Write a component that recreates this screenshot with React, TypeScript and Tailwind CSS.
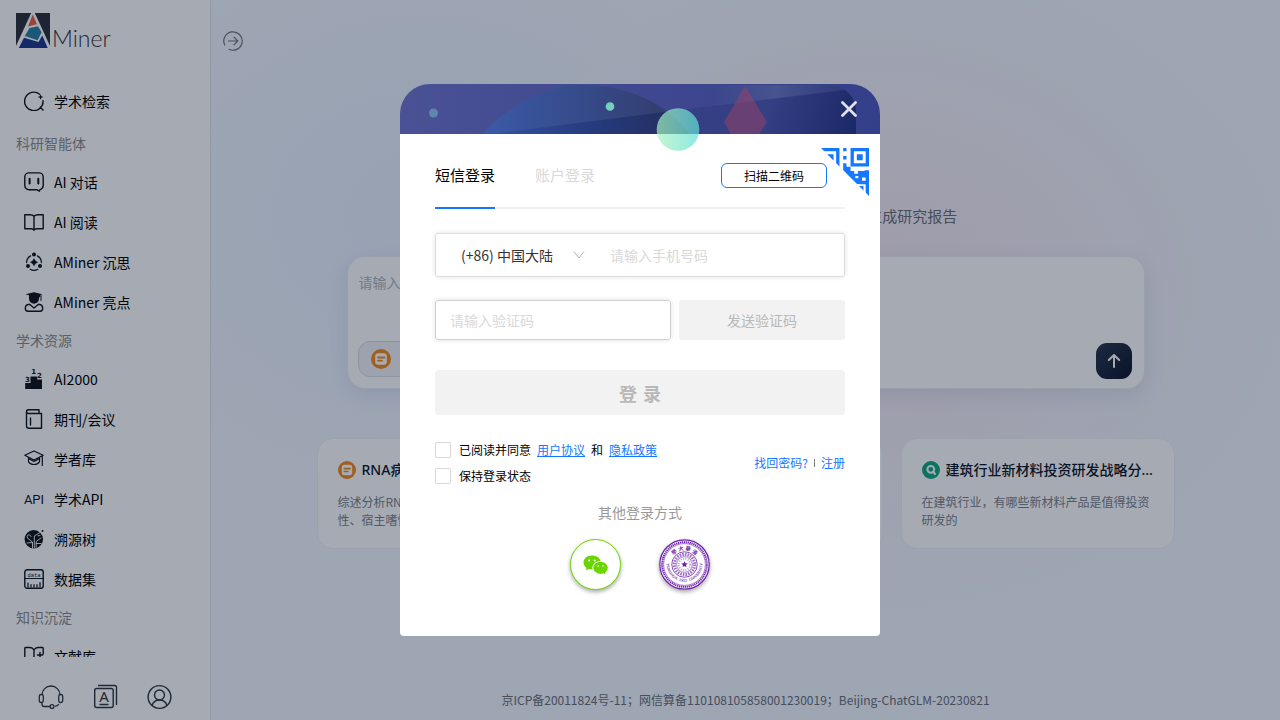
import React, { useState } from 'react';

const DARK = '#10131c';

const stroke = {
  fill: 'none',
  stroke: DARK,
  strokeWidth: 1.4,
  strokeLinecap: 'round',
  strokeLinejoin: 'round',
} as const;

const Icon: React.FC<{ children: React.ReactNode; className?: string }> = ({
  children,
  className = 'h-5 w-5 shrink-0',
}) => (
  <svg viewBox="0 0 20 20" className={className} aria-hidden="true">
    {children}
  </svg>
);

const icons: Record<string, React.ReactNode> = {
  search: (
    <Icon>
      <path {...stroke} d="M15.6 3.2A9.2 9.2 0 1 0 19 9.6M16.2 16.2l2.8 2.8" />
      <path fill={DARK} d="M16.6 3.2l.8 2 2 .8-2 .8-.8 2-.8-2-2-.8 2-.8z" />
    </Icon>
  ),
  chat: (
    <Icon>
      <path {...stroke} d="M5 .9h10A4.2 4.2 0 0 1 19.2 5v8.6a4.2 4.2 0 0 1-3.2 4l-.6 1.6-2.2-1.4H5A4.2 4.2 0 0 1 .8 13.6V5A4.2 4.2 0 0 1 5 .9z" />
      <path {...stroke} strokeWidth={2} d="M5.6 6.8v4.6M14.3 6.8v4.6" />
    </Icon>
  ),
  read: (
    <Icon>
      <path {...stroke} d="M10 4.2C9 3 7.5 2.7 6 2.7H.8v14H7c1.5 0 2.6.5 3 1.5.4-1 1.5-1.5 3-1.5h6.2v-14H14c-1.5 0-3 .3-4 1.5zM10 4.2v14" />
    </Icon>
  ),
  think: (
    <Icon>
      <path {...stroke} strokeWidth={1.2} d="M6.6 3.9A7.6 7.6 0 0 0 2.6 10.6M13.4 3.9A7.6 7.6 0 0 1 17.4 10.6M6.2 17.3a7.6 7.6 0 0 0 7.6 0" />
      <circle cx="10" cy="2.6" r="2" fill={DARK} />
      <circle cx="4" cy="14" r="2" fill={DARK} />
      <circle cx="16" cy="14" r="2" fill={DARK} />
      <path fill={DARK} d="M10 6.3l1.5 2.500 2.500 1.500-2.500 1.500L10 14.300l-1.500-2.500L6 10.300l2.500-1.500z" />
    </Icon>
  ),
  highlight: (
    <Icon>
      <path fill={DARK} d="M10 .2l8.500 2-2.300.8v2.200H15v1.500a5 5 0 0 1-10 0V3.300L1.500 2.200z" />
      <path {...stroke} strokeWidth={1} d="M17 3.500v5" />
      <path {...stroke} d="M5.500 12.300C3 12.500 1.300 14 1.300 16.200c0 2 1 3 2.700 3h12c1.700 0 2.700-1 2.700-3 0-2.200-1.700-3.700-4.200-3.900L10 16z" />
    </Icon>
  ),
  rank: (
    <Icon>
      <path fill={DARK} d="M1.200 14h5.300V7.500h6.700v3H18V20H1.200z" />
      <g fill={DARK} fontFamily="DejaVu Sans" fontWeight="bold">
        <text x="7.200" y="5.400" fontSize="7">1</text>
        <text x="13" y="9" fontSize="7">2</text>
        <text x="1" y="13" fontSize="7">3</text>
      </g>
    </Icon>
  ),
  journal: (
    <Icon>
      <path {...stroke} d="M15 4V.8H4.500a2.200 2.200 0 0 0-2 2.200v14a2.200 2.200 0 0 0 2 2.200h13V4.500H4.500a2 2 0 0 1-2-1.700M6.500 9v7" />
    </Icon>
  ),
  scholar: (
    <Icon>
      <path {...stroke} strokeWidth={1.2} d="M10 2l9.200 4.300L10 11 .8 6.300zM4.500 8.500v4.300c2.500 3.600 8.500 3.600 11 0V8.500M18.300 7v9.500M4.800 9.800L10 12.500l5.200-2.700" />
    </Icon>
  ),
  api: (
    <Icon>
      <text x="10" y="15" textAnchor="middle" fontFamily="Roboto" fontSize="13" fill={DARK}>API</text>
    </Icon>
  ),
  tree: (
    <Icon>
      <circle cx="9.800" cy="10.200" r="9.200" fill={DARK} />
      <circle cx="18.500" cy="2" r="1" fill={DARK} />
      <path fill="none" stroke="#fff" strokeWidth=".9" strokeLinecap="round" d="M8.500 19V13L4 9.500M4 9.500a2 2 0 1 1 3-2M8.500 13.500L3 14M10.300 19V7l6.500-4M12.200 18.500v-6L17 9M12.200 14.500h5M14 6.800l2-.2" />
    </Icon>
  ),
  data: (
    <Icon>
      <rect x=".8" y=".8" width="18.400" height="18.400" rx="2.200" {...stroke} />
      <path {...stroke} strokeWidth={1.2} d="M1 9.500h18M4 18v-4M7 18v-2.500M10 18v-2.500M13 18v-2.500M16 18v-4.500" />
      <text x="10" y="7.500" textAnchor="middle" fontFamily="Liberation Mono" fontSize="5.500" fill={DARK}>data</text>
    </Icon>
  ),
  library: (
    <Icon>
      <path {...stroke} d="M10 4C9 2.200 7.500 1.500 6 1.500H1.500a.7.700 0 0 0-.7.700v14H7c1.500 0 2.600.5 3 1.500M10 4c1-1.800 2.500-2.500 4-2.500h4.500a.7.700 0 0 1 .7.700V8M10 4v12M13.500 9h5M16 6.500v5" />
    </Icon>
  ),
};

interface NavGroup {
  title: string;
  items: { icon: string; label: string }[];
}

const groups: NavGroup[] = [
  {
    title: '科研智能体',
    items: [
      { icon: 'chat', label: 'AI 对话' },
      { icon: 'read', label: 'AI 阅读' },
      { icon: 'think', label: 'AMiner 沉思' },
      { icon: 'highlight', label: 'AMiner 亮点' },
    ],
  },
  {
    title: '学术资源',
    items: [
      { icon: 'rank', label: 'AI2000' },
      { icon: 'journal', label: '期刊/会议' },
      { icon: 'scholar', label: '学者库' },
      { icon: 'api', label: '学术API' },
      { icon: 'tree', label: '溯源树' },
      { icon: 'data', label: '数据集' },
    ],
  },
  {
    title: '知识沉淀',
    items: [{ icon: 'library', label: '文献库' }],
  },
];

const NavItem: React.FC<{ icon: string; label: string }> = ({ icon, label }) => (
  <a href="#" className="flex h-10 items-center gap-2.5 pl-6 text-sm text-black">
    {icons[icon]}
    {label}
  </a>
);

const Logo = () => (
  <div className="flex h-9 items-end pl-4">
    <svg viewBox="0 0 34 35" className="h-[35px] w-[34px]" aria-hidden="true">
      <path fill="#2f3038" d="M0 0h34v35H0z" />
      <path fill="#fff" d="M15.200 0h3.600L34 33v2H0v-2z" />
      <path fill="#e8604c" d="M16.700 1.500l4.300 9.800-9 2.300z" />
      <path fill="#2b7fa3" d="M13.500 15l8.500-1.700 3.600 5.900-4 8-12.800-4.200z" />
      <path fill="#1d3a8f" d="M8 24.800L22.500 29l3.800-6.500L31.700 35H2.800z" />
    </svg>
    <span className="pl-0.5 font-[Lato] text-[23px] leading-5 font-light text-[#33353d]">Miner</span>
  </div>
);

const Sidebar = () => (
  <aside className="flex h-full w-[211px] shrink-0 flex-col border-r border-[#dfe4ee] bg-white pt-3 shadow-[2px_0_12px_rgba(80,110,180,0.18)]">
    <Logo />
    <nav className="mt-[33px] min-h-0 flex-1 overflow-hidden">
      <NavItem icon="search" label="学术检索" />
      <div className="pt-1">
        {groups.map((group) => (
          <section key={group.title}>
            <h2 className="flex h-[37px] items-center pb-0.5 pl-4 text-sm text-[#8c8c8c]">{group.title}</h2>
            {group.items.map((item) => (
              <NavItem key={item.label} {...item} />
            ))}
          </section>
        ))}
      </div>
    </nav>
    <div className="flex h-[63px] items-center justify-center gap-7 pt-4">
      <button aria-label="客服">
        <svg viewBox="0 0 26 26" className="h-[26px] w-[26px]" fill="none" stroke="#333640" strokeWidth="1.300">
          <path d="M4 11a9 9 0 0 1 18 0M4 19v1.200c0 1.500.8 2.300 2.300 2.300H12" />
          <rect x="1.300" y="10.500" width="4" height="8" rx="1.800" />
          <rect x="20.700" y="10.500" width="4" height="8" rx="1.800" />
          <circle cx="14" cy="22.500" r="1.900" />
          <path d="M17 22.300c1.800-.2 3.200-1 4-2.300" />
        </svg>
      </button>
      <button aria-label="语言">
        <svg viewBox="0 0 26 26" className="h-[26px] w-[26px]" fill="none" stroke="#333640" strokeWidth="1.400">
          <rect x="2.700" y="4.500" width="18.500" height="19" rx="2" />
          <path d="M6 1.500h16.500a2 2 0 0 1 2 2V21M7.500 20.500h9" />
          <text x="12" y="17.500" textAnchor="middle" fontFamily="Noto Sans" fontSize="15" fill="#333640" stroke="none">A</text>
        </svg>
      </button>
      <button aria-label="个人中心">
        <svg viewBox="0 0 26 26" className="h-[26px] w-[26px]" fill="none" stroke="#333640" strokeWidth="1.400">
          <circle cx="13.500" cy="13" r="11.400" />
          <circle cx="13.500" cy="11" r="5" />
          <path d="M6 21.500c1.200-3.500 3.500-5.500 7.500-5.500s6.300 2 7.500 5.500" />
        </svg>
      </button>
    </div>
  </aside>
);

const ReportIcon: React.FC<{ className: string }> = ({ className }) => (
  <svg viewBox="0 0 20 20" className={className} aria-hidden="true">
    <circle cx="10" cy="10" r="10" fill="#f58a1f" />
    <rect x="4.200" y="4.200" width="11.600" height="11.600" rx="3" fill="#fff" />
    <path d="M7 8.500h6.500M7 11.700h4" stroke="#f58a1f" strokeWidth="1.800" strokeLinecap="round" />
  </svg>
);

const SearchBadge: React.FC<{ className: string }> = ({ className }) => (
  <svg viewBox="0 0 20 20" className={className} aria-hidden="true">
    <circle cx="10" cy="10" r="10" fill="#12a97f" />
    <circle cx="9.800" cy="9.300" r="3.800" fill="none" stroke="#fff" strokeWidth="2.200" />
    <path d="M12.500 12.200l2 2.200" stroke="#fff" strokeWidth="2.200" strokeLinecap="round" />
  </svg>
);

const cards = [
  {
    Badge: ReportIcon,
    title: 'RNA病毒跨物种传播机制',
    text: '综述分析RNA病毒的跨物种传播规律与变异性、宿主嗜性等',
  },
  {
    Badge: ReportIcon,
    title: '大模型推理能力研究进展',
    text: '梳理大语言模型推理能力的主要研究方向',
  },
  {
    Badge: SearchBadge,
    title: '建筑行业新材料投资研发战略分析报告',
    text: '在建筑行业，有哪些新材料产品是值得投资研发的',
  },
];

const Home = () => (
  <main className="relative flex min-w-0 flex-1 flex-col items-center bg-[#f3f7ff] bg-[radial-gradient(ellipse_420px_330px_at_62%_40%,#f5e8f1,#f5e8f100),radial-gradient(ellipse_340px_280px_at_20%_30%,#e9f1ff,#e9f1ff00)] px-5 pt-[133px]">
    <button className="absolute top-[31px] left-3" aria-label="展开侧栏">
      <svg viewBox="0 0 20 20" className="h-5 w-5" fill="none" stroke="#707684" strokeWidth="1.200" strokeLinecap="round">
        <path d="M1.700 14A9.200 9.200 0 1 1 6 18.300M5.500 10h9M11 6.200l3.800 3.800-3.800 3.800" />
      </svg>
    </button>
    <h1 className="text-4xl leading-[60px] font-semibold text-gray-900">AMiner 沉思</h1>
    <p className="mt-[11px] text-[15px] leading-6 text-[#6b6f78]">基于海量学术文献进行推理与检索分析， 为你自动生成研究报告</p>
    <div className="mt-7 flex h-[133px] w-full max-w-[798px] flex-col justify-between rounded-[18px] border border-[#eceef6] bg-white px-2.5 pt-[9px] pb-[9px] shadow-[0_6px_20px_rgba(90,100,170,0.14)]">
      <textarea
        aria-label="研究问题"
        placeholder="请输入你想研究的问题"
        className="h-16 w-full resize-none px-px pt-1.5 text-sm outline-none placeholder:text-[#b0b3ba]"
      />
      <div className="flex items-start justify-between">
        <button className="flex h-9 items-center gap-3 rounded-xl border border-[#d9dbe4] bg-[#f2f2f8] px-3 text-sm">
          <ReportIcon className="h-5 w-5" />
          综述报告
        </button>
        <button
          aria-label="发送"
          className="mt-0.5 mr-0.5 flex h-9 w-9 items-center justify-center rounded-[11px] bg-linear-to-br from-[#2c3b53] to-[#0f172a]"
        >
          <svg viewBox="0 0 16 16" className="h-4 w-4" fill="none" stroke="#fff" strokeWidth="2" strokeLinecap="round" strokeLinejoin="round">
            <path d="M8 14V2.200M2.800 7L8 2l5.200 5" />
          </svg>
        </button>
      </div>
    </div>
    <div className="mt-[49px] grid w-full max-w-[858px] grid-cols-3 gap-[18px]">
      {cards.map(({ Badge, title, text }) => (
        <article key={title} className="h-[111px] min-w-0 rounded-2xl border border-[#eef0f7] bg-white px-5 pt-5">
          <div className="flex h-[22px] items-center gap-1.5">
            <Badge className="h-[18px] w-[18px] shrink-0" />
            <h3 className="truncate font-['Noto_Sans','Noto_Sans_CJK_SC',sans-serif] text-sm font-medium text-[#0f172a]">
              {title}
            </h3>
          </div>
          <p className="mt-3 text-xs leading-[18px] text-[#7b818c]">{text}</p>
        </article>
      ))}
    </div>
    <footer className="mt-auto pb-2.5 text-xs leading-5 text-[#6c707a]">
      京ICP备20011824号-11；网信算备110108105858001230019；Beijing-ChatGLM-20230821
    </footer>
  </main>
);

const Banner = () => (
  <svg viewBox="0 0 480 70" className="pointer-events-none absolute inset-x-0 top-0 w-full" aria-hidden="true">
    <defs>
      <linearGradient id="base" x1="0" x2="1">
        <stop offset="0" stopColor="#4a5195" />
        <stop offset="1" stopColor="#343f8a" />
      </linearGradient>
      <linearGradient id="dome" x1="0" x2="1">
        <stop offset="0" stopColor="#3b5aa8" />
        <stop offset=".5" stopColor="#354a88" />
        <stop offset="1" stopColor="#323a66" />
      </linearGradient>
      <linearGradient id="domeLow" x1="0" x2="1">
        <stop offset="0" stopColor="#3554a5" />
        <stop offset=".55" stopColor="#253a7c" />
        <stop offset="1" stopColor="#232c5a" />
      </linearGradient>
      <linearGradient id="wedge" gradientUnits="userSpaceOnUse" x1="280" y1="0" x2="456" y2="50">
        <stop offset="0" stopColor="#343f84" />
        <stop offset=".5" stopColor="#343f84" />
        <stop offset="1" stopColor="#1b2866" />
      </linearGradient>
      <linearGradient id="sheen" x1="0" x2="1">
        <stop offset="0" stopColor="#47548f" stopOpacity="0" />
        <stop offset=".45" stopColor="#47548f" />
        <stop offset="1" stopColor="#2a3676" />
      </linearGradient>
      <linearGradient id="ball" x1="0" x2="1">
        <stop offset="0" stopColor="#a9f3bd" />
        <stop offset="1" stopColor="#5fded9" />
      </linearGradient>
      <clipPath id="head">
        <path d="M0 50V30A30 30 0 0 1 30 0H450A30 30 0 0 1 480 30V50z" />
      </clipPath>
      <clipPath id="domeClip">
        <path d="M83 50C106 23 145 1 185 1s84 19 104 49z" />
      </clipPath>
    </defs>
    <g clipPath="url(#head)">
      <path fill="url(#base)" d="M0 0h480v50H0z" />
      <path fill="url(#sheen)" d="M310 1h120a26 26 0 0 1 26 26v23H310z" />
      <path fill="url(#wedge)" d="M83 50L445 6a26 26 0 0 1 11 21v23z" />
      <g clipPath="url(#domeClip)">
        <path fill="url(#dome)" d="M83 0h206v50H83z" />
        <path fill="url(#domeLow)" d="M83 51L289 25v26z" />
      </g>
      <path fill="#9c4261" opacity=".5" d="M345 2l22 36-8 12h-28l-7-12z" />
      <circle cx="33.500" cy="29" r="4.500" fill="#5f86ad" />
      <circle cx="210" cy="22.500" r="4.300" fill="#74d0bd" />
    </g>
    <circle cx="278" cy="45.500" r="21.300" fill="url(#ball)" opacity=".7" />
  </svg>
);

// 13x13 modules, only the half above the diagonal is shown
const QrCorner = () => (
  <svg viewBox="0 0 13 13" className="h-12 w-12" fill="#1677ff" aria-hidden="true">
    <clipPath id="qrHalf">
      <path d="M0 0h13v13z" />
    </clipPath>
    <g clipPath="url(#qrHalf)">
      <path fillRule="evenodd" d="M8 0h5v5H8zM8.900.9v3.200h3.200V.9z" />
      <path d="M9.700 1.700h1.600v1.600H9.700zM0 0h5v5.200h-.9V.9H0zM1.700 1.700h1.700v1.700H1.700z" />
      <path d="M6 0h.9v.9H6zM6 2.200h.9v.9H6zM6 4.100h.9v1H8v1.100h1V7h1v-.8h1.800V6H13v3.300h-.9V8h-1v.9H13v.9h-2L9 9.700 6 6z" />
      <path fill="#fff" d="M9.300 7.600h.8v.6h-.8z" />
      <path d="M12.100 9.600h.9V13h-.9zM10 10.300h1.500v1.500H10z" />
    </g>
  </svg>
);

const WechatIcon = () => (
  <svg viewBox="0 0 26 20" className="h-5 w-[26px]" aria-hidden="true">
    <path fill="#6ad500" d="M9 .5C4 .5.500 3.700.500 7.600c0 2.200 1.200 4.100 3 5.400l-.8 2.600 3-1.600c1 .3 2.100.5 3.300.5h.5C8.700 9.500 12.500 6 17.200 6h.3C16.800 2.700 13.200.5 9 .5z" />
    <ellipse cx="17.500" cy="12.800" rx="7.300" ry="6.100" fill="#6ad500" />
    <path fill="#6ad500" d="M19.500 17.500l3 2.300-.6-3.600z" />
    <circle cx="6.200" cy="5.500" r="1" fill="#fff" />
    <circle cx="11.700" cy="5.500" r="1" fill="#fff" />
    <circle cx="15.200" cy="11" r=".8" fill="#fff" />
    <circle cx="20" cy="11" r=".8" fill="#fff" />
  </svg>
);

const SealIcon = () => (
  <svg viewBox="0 0 52 52" className="h-full w-full" aria-hidden="true">
    <defs>
      <path id="arcTop" d="M11.500 26a14.500 14.500 0 0 1 29 0" />
      <path id="arcBottom" d="M7.500 25a18.500 18.500 0 0 0 37 0" />
    </defs>
    <g fill="none" stroke="#6a1fa8">
      <circle cx="26" cy="26" r="25.200" strokeWidth="1.300" fill="#fff" />
      <circle cx="26" cy="26" r="22.800" strokeWidth="2" strokeDasharray="1.300 .7" />
      <circle cx="26" cy="26" r="21.300" strokeWidth=".6" />
      <circle cx="26" cy="26" r="13" strokeWidth=".8" />
      <circle cx="26" cy="26" r="10.300" strokeWidth="3.200" strokeDasharray="1.600 1.100" opacity=".65" />
      <circle cx="26" cy="26" r="8" strokeWidth=".6" />
      <circle cx="26" cy="26" r="5.800" strokeWidth="2" strokeDasharray="1 1.300" opacity=".45" />
    </g>
    <g fill="#6a1fa8" fontWeight="bold">
      <text fontSize="5.500" fontFamily="Noto Sans CJK SC" textAnchor="middle">
        <textPath href="#arcTop" startOffset="50%">學 大 華 清</textPath>
      </text>
      <text fontSize="4" fontFamily="Liberation Sans" textAnchor="middle" opacity=".8">
        <textPath href="#arcBottom" startOffset="50%">TSINGHUA ·1911· UNIVERSITY</textPath>
      </text>
      <path d="M26 22.500l.9 2.300 2.500.1-1.900 1.600.6 2.400-2.100-1.400-2.100 1.400.6-2.400-1.900-1.600 2.500-.1z" />
    </g>
  </svg>
);

const tabs = ['短信登录', '账户登录'];

const checkboxClass =
  'h-4 w-4 appearance-none rounded-xs border border-[#d9d9d9] bg-white checked:border-[#1677ff] checked:bg-[#1677ff]';

const LoginDialog: React.FC<{ onClose: () => void }> = ({ onClose }) => {
  const [activeTab, setActiveTab] = useState(0);

  return (
    <div role="dialog" aria-modal="true" aria-label="登录" className="relative w-full max-w-[480px]">
      <div className="h-[50px]" />
      <button onClick={onClose} aria-label="关闭" className="absolute top-[17px] right-[23px] z-10">
        <svg viewBox="0 0 16 16" className="h-4 w-4" stroke="#dfe1f0" strokeWidth="2.800" strokeLinecap="round">
          <path d="M1.500 1.500l13 13M14.500 1.500l-13 13" />
        </svg>
      </button>
      <div className="rounded-b-[4px] bg-white px-[35px] pt-6 pb-[46px]">
        <div className="flex border-b-2 border-[#f0f0f0]">
          {tabs.map((tab, idx) => (
            <button
              key={tab}
              onClick={() => setActiveTab(idx)}
              className={`mr-10 -mb-0.5 h-[51px] border-b-2 pb-3.5 text-[15px] ${
                activeTab === idx ? 'border-[#1677ff] text-black' : 'border-transparent text-[#d9d9d9]'
              }`}
            >
              {tab}
            </button>
          ))}
          <button className="mt-[5px] mr-[18px] ml-auto h-[25px] w-[106px] rounded-md border border-[#1677ff] text-xs text-black">
            扫描二维码
          </button>
        </div>
        <div className="absolute top-16 right-[11px]">
          <QrCorner />
        </div>

        <form onSubmit={(e) => e.preventDefault()}>
          <div className="mt-6 flex h-11 items-center rounded-[3px] border border-[#dedede] text-sm shadow-[0_0_5px_rgba(0,0,0,0.12)]">
            <div className="relative ml-[25px] w-[125px]">
              <select aria-label="国家或地区" className="w-full appearance-none text-[#333] outline-none">
                <option>(+86) 中国大陆</option>
              </select>
              <svg viewBox="0 0 12 8" className="pointer-events-none absolute top-1.5 right-px h-2 w-3" fill="none" stroke="#b5b5b5">
                <path d="M1 .5l5 6.500 5-6.500" />
              </svg>
            </div>
            <input
              type="tel"
              aria-label="手机号码"
              placeholder="请输入手机号码"
              className="ml-6 min-w-0 flex-1 outline-none placeholder:text-[#d9d9d9]"
            />
          </div>
          <div className="mt-[23px] flex h-10 gap-2 text-sm">
            <input
              type="text"
              aria-label="验证码"
              placeholder="请输入验证码"
              className="min-w-0 flex-1 rounded-[3px] border border-[#d0d0d0] px-3.5 shadow-[0_0_5px_rgba(0,0,0,0.12)] outline-none placeholder:text-[#d9d9d9]"
            />
            <button type="button" className="w-[166px] rounded-[3px] bg-[#f2f2f2] text-[#b8b8b8]">
              发送验证码
            </button>
          </div>
          <button
            type="submit"
            className="mt-[30px] flex h-[45px] w-full items-center justify-center gap-1.5 rounded bg-[#f2f2f2] text-lg font-bold text-[#b8b8b8]"
          >
            <span>登</span>
            <span>录</span>
          </button>

          <div className="mt-[27px] flex items-center justify-between text-xs leading-4">
            <div className="flex flex-col gap-2.5">
              <div className="flex h-4 items-center gap-2">
                <input id="agree" type="checkbox" className={checkboxClass} />
                <label htmlFor="agree">已阅读并同意</label>
                <span className="-ml-0.5 flex gap-1.5">
                  <a href="#" className="text-[#1677ff] underline">用户协议</a>
                  和
                  <a href="#" className="text-[#1677ff] underline">隐私政策</a>
                </span>
              </div>
              <div className="flex h-4 items-center gap-2">
                <input id="keep" type="checkbox" className={checkboxClass} />
                <label htmlFor="keep">保持登录状态</label>
              </div>
            </div>
            <div className="flex items-center gap-1.5 text-[#1677ff]">
              <a href="#">找回密码?</a>
              <span className="h-2 w-px bg-[#808080]" />
              <a href="#">注册</a>
            </div>
          </div>
        </form>

        <p className="mt-[18px] text-center text-sm leading-5 text-[#999]">其他登录方式</p>
        <div className="mt-[17px] flex justify-center gap-[38px]">
          <button
            aria-label="微信登录"
            className="flex h-[51px] w-[51px] items-center justify-center rounded-full border border-[#6ad500] bg-white shadow-[0_2px_4px_rgba(0,0,0,0.35)]"
          >
            <WechatIcon />
          </button>
          <button
            aria-label="清华大学账号登录"
            className="h-[51px] w-[51px] rounded-full shadow-[0_2px_4px_rgba(0,0,0,0.35)]"
          >
            <SealIcon />
          </button>
        </div>
      </div>
      <Banner />
    </div>
  );
};

export default function App() {
  const [loginOpen, setLoginOpen] = useState(true);

  return (
    <div className="flex h-screen overflow-hidden font-['Noto_Sans_CJK_SC',sans-serif]">
      <Sidebar />
      <Home />
      {loginOpen && (
        <div className="fixed inset-0 flex items-center justify-center bg-[rgba(0,15,38,0.35)]">
          <LoginDialog onClose={() => setLoginOpen(false)} />
        </div>
      )}
    </div>
  );
}
